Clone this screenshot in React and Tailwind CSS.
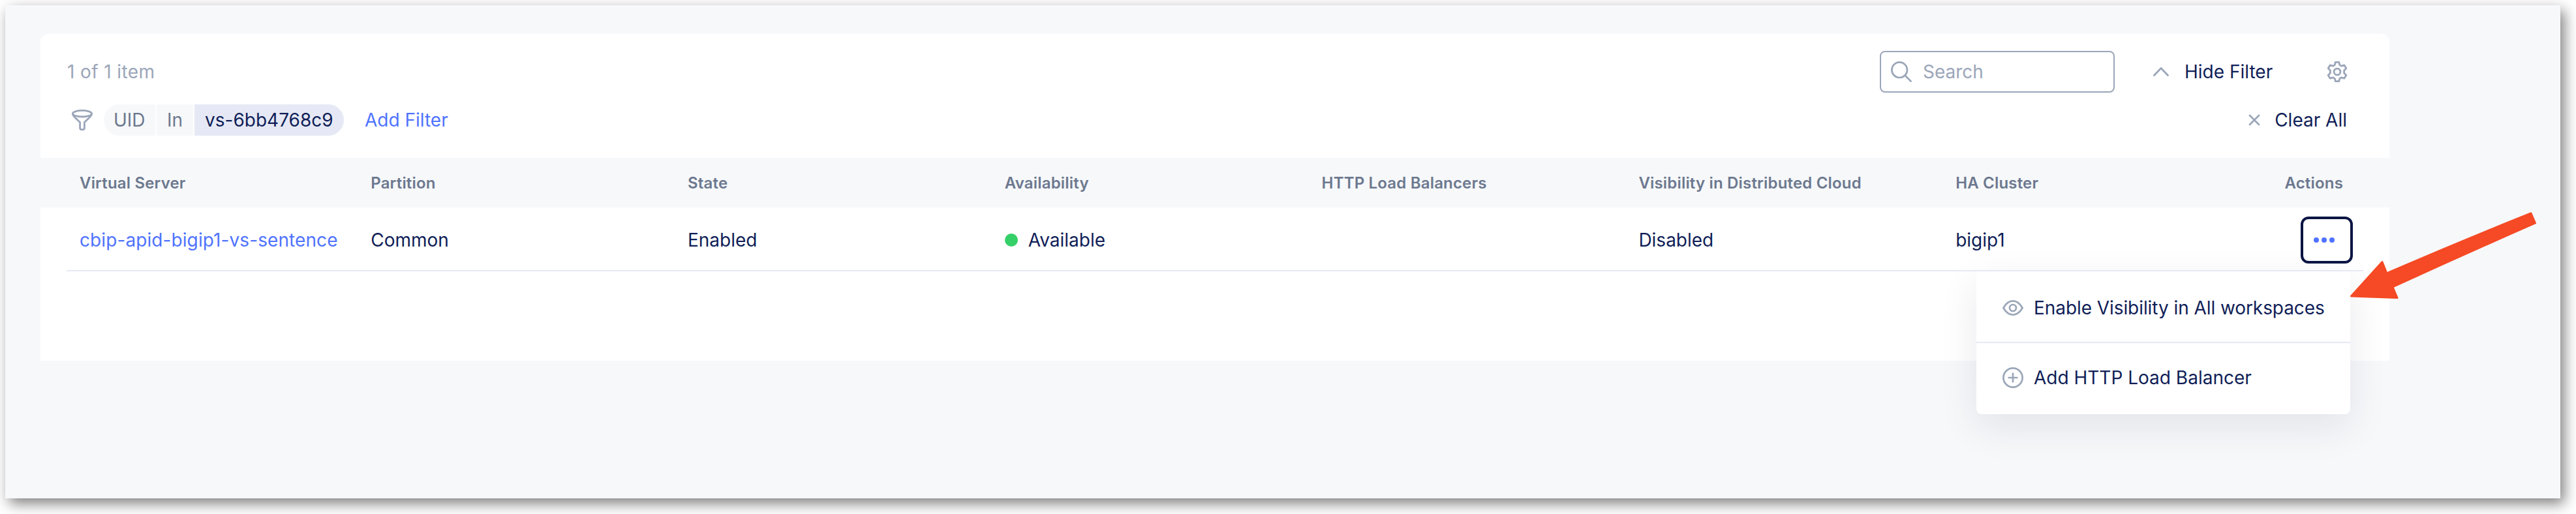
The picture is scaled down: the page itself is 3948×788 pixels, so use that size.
const cols = "grid grid-cols-[446.2px_485.8px_485.8px_485.8px_485.8px_485.8px_1fr]";

function Funnel() {
  return (
    <svg width="32" height="32" viewBox="0 0 32 32" fill="none" stroke="#9ba6b9" strokeWidth="2.8" strokeLinejoin="round">
      <ellipse cx="16" cy="6.2" rx="14.6" ry="4.8" />
      <path d="M1.4 6.6C1.8 9.2 3.2 10.5 5 12.3L12.6 19.4V28.3C12.6 29.7 13.4 30.6 14.7 30.6H17.3C18.6 30.6 19.4 29.7 19.4 28.3V19.4L27 12.3C28.8 10.5 30.2 9.2 30.6 6.6" />
    </svg>
  );
}

function Gear() {
  return (
    <svg width="32" height="32" viewBox="0 0 32 32" fill="none" stroke="#9ba6b9" strokeWidth="2.8" strokeLinejoin="round">
      <circle cx="16" cy="16" r="4.9" />
      <path d="M13.2 1.4H18.8L19.8 5.6L22.6 7.2L26.9 5.9L29.8 10.8L26.6 14V18L29.8 21.2L26.9 26.1L22.6 24.8L19.8 26.4L18.8 30.6H13.2L12.2 26.4L9.4 24.8L5.1 26.1L2.2 21.2L5.4 18V14L2.2 10.8L5.1 5.9L9.4 7.2L12.2 5.6Z" />
    </svg>
  );
}

export default function App() {
  return (
    <div className="relative h-[788px] w-[3948px] overflow-hidden bg-white pt-2 pl-2 font-['Inter',sans-serif] text-[28px] leading-[34px] font-[370] text-[#0f1e57]">
      <div className="h-[756px] w-[3916px] bg-[#f7f8fa] pt-11 pl-[54px] shadow-[6px_8px_20px_rgba(0,0,0,0.5)]">
        <div className="flex h-[501px] w-[3600px] flex-col rounded-t-xl bg-white">
          <div className="flex h-[190px] flex-col pt-[26px] pr-16 pl-10">
            <div className="flex h-16 items-center">
              <span className="pl-px tracking-[0.4px] text-[#9ba6b9]">1 of 1 item</span>
              <div className="ml-auto flex h-16 w-[360px] items-center rounded-lg border-2 border-[#9ba6b9] pl-[15px]">
                <svg width="32" height="32" viewBox="0 0 32 32" fill="none" stroke="#9ba6b9" strokeWidth="2.7" strokeLinecap="round">
                  <circle cx="13.2" cy="13.2" r="11.8" />
                  <path d="M22 22L30.5 30.5" />
                </svg>
                <span className="ml-[17px] text-[#9ba6b9]">Search</span>
              </div>
              <svg className="ml-[59px]" width="24" height="14" viewBox="0 0 24 14" fill="none" stroke="#9ba6b9" strokeWidth="2.8" strokeLinecap="round" strokeLinejoin="round">
                <path d="M1.5 12.5L12 1.5L22.5 12.5" />
              </svg>
              <span className="ml-6 w-[135px] whitespace-nowrap">Hide Filter</span>
              <div className="ml-[83px]"><Gear /></div>
            </div>
            <div className="mt-[18px] flex h-12 items-center pl-2">
              <Funnel />
              <div className="ml-[17px] flex h-12 w-[368px] gap-0.5 overflow-hidden rounded-full leading-[48px]">
                <span className="w-[79px] bg-[#f7f8fa] pl-[15px] text-[#6c788f]">UID</span>
                <span className="w-14 bg-[#f7f8fa] pl-4 text-[#6c788f]">In</span>
                <span className="flex-1 bg-[#e6e9f5] pl-4">vs-6bb4768c9</span>
              </div>
              <span className="ml-8 text-[#4f73ff]">Add Filter</span>
              <svg className="ml-auto" width="18" height="18" viewBox="0 0 18 18" fill="none" stroke="#9ba6b9" strokeWidth="2.8" strokeLinecap="round">
                <path d="M2 2L16 16M16 2L2 16" />
              </svg>
              <span className="mr-px ml-[22px]">Clear All</span>
            </div>
          </div>
          <div className={`${cols} h-[76px] items-center bg-[#f7f8fa] pt-0.5 pr-[71px] pl-[60px] text-2xl font-semibold tracking-[0.18px] text-[#6c788f]`}>
            <span>Virtual Server</span>
            <span>Partition</span>
            <span>State</span>
            <span>Availability</span>
            <span>HTTP Load Balancers</span>
            <span>Visibility in Distributed Cloud</span>
            <div className="flex justify-between">
              <span>HA Cluster</span>
              <span>Actions</span>
            </div>
          </div>
          <div className={`${cols} relative z-20 mr-10 ml-10 h-[98px] items-center border-b-2 border-[#e6e9f5] pt-1 pr-4 pl-5`}>
            <span className="tracking-[0.09px] text-[#4f73ff]">cbip-apid-bigip1-vs-sentence</span>
            <span>Common</span>
            <span>Enabled</span>
            <span className="flex items-center"><i className="mr-4 h-5 w-5 rounded-full bg-[#36d068]" />Available</span>
            <span />
            <span>Disabled</span>
            <div className="flex items-center justify-between">
              <span>bigip1</span>
              <button className="flex h-[72px] w-20 items-center gap-1 rounded-xl border-4 border-[#0a1543] bg-white pl-4">
                <i className="h-2 w-2 rounded-full bg-[#4f73ff]" />
                <i className="h-2 w-2 rounded-full bg-[#4f73ff]" />
                <i className="h-2 w-2 rounded-full bg-[#4f73ff]" />
              </button>
            </div>
          </div>
        </div>
      </div>

      <div className="absolute top-[414px] left-[3029px] z-10 h-[221px] w-[573px] rounded-b-lg bg-white shadow-[0_20px_60px_rgba(15,20,60,0.09)]">
        <div className="flex h-[112px] items-center gap-4 border-b-2 border-[#e6e9f5] pt-1.5 pl-10">
          <svg width="32" height="24" viewBox="0 0 32 24" fill="none" stroke="#9ba6b9" strokeWidth="2.7" strokeLinejoin="round">
            <path d="M1.4 12C5.5 5 10.5 1.4 16 1.4S26.5 5 30.6 12C26.5 19 21.5 22.6 16 22.6S5.5 19 1.4 12Z" />
            <circle cx="16" cy="12" r="5" />
          </svg>
          <span className="tracking-[-0.07px]">Enable Visibility in All workspaces</span>
        </div>
        <div className="flex h-[106px] items-center gap-4 pl-10">
          <svg width="32" height="32" viewBox="0 0 32 32" fill="none" stroke="#9ba6b9" strokeWidth="2.7" strokeLinecap="round">
            <circle cx="16" cy="16" r="14.6" />
            <path d="M16 9.7V22.3M9.7 16H22.3" />
          </svg>
          <span>Add HTTP Load Balancer</span>
        </div>
      </div>

      <svg className="absolute top-[320px] left-[3596px] z-30" width="300" height="145" viewBox="0 0 300 145" fill="#f54a25" stroke="#f54a25" strokeWidth="3" strokeLinejoin="round">
        <path d="M7.5 134L55 81.5L62 99Q175 50 283 7L289.5 22Q180 70 71 120L78 136.5Z" />
      </svg>
    </div>
  );
}
